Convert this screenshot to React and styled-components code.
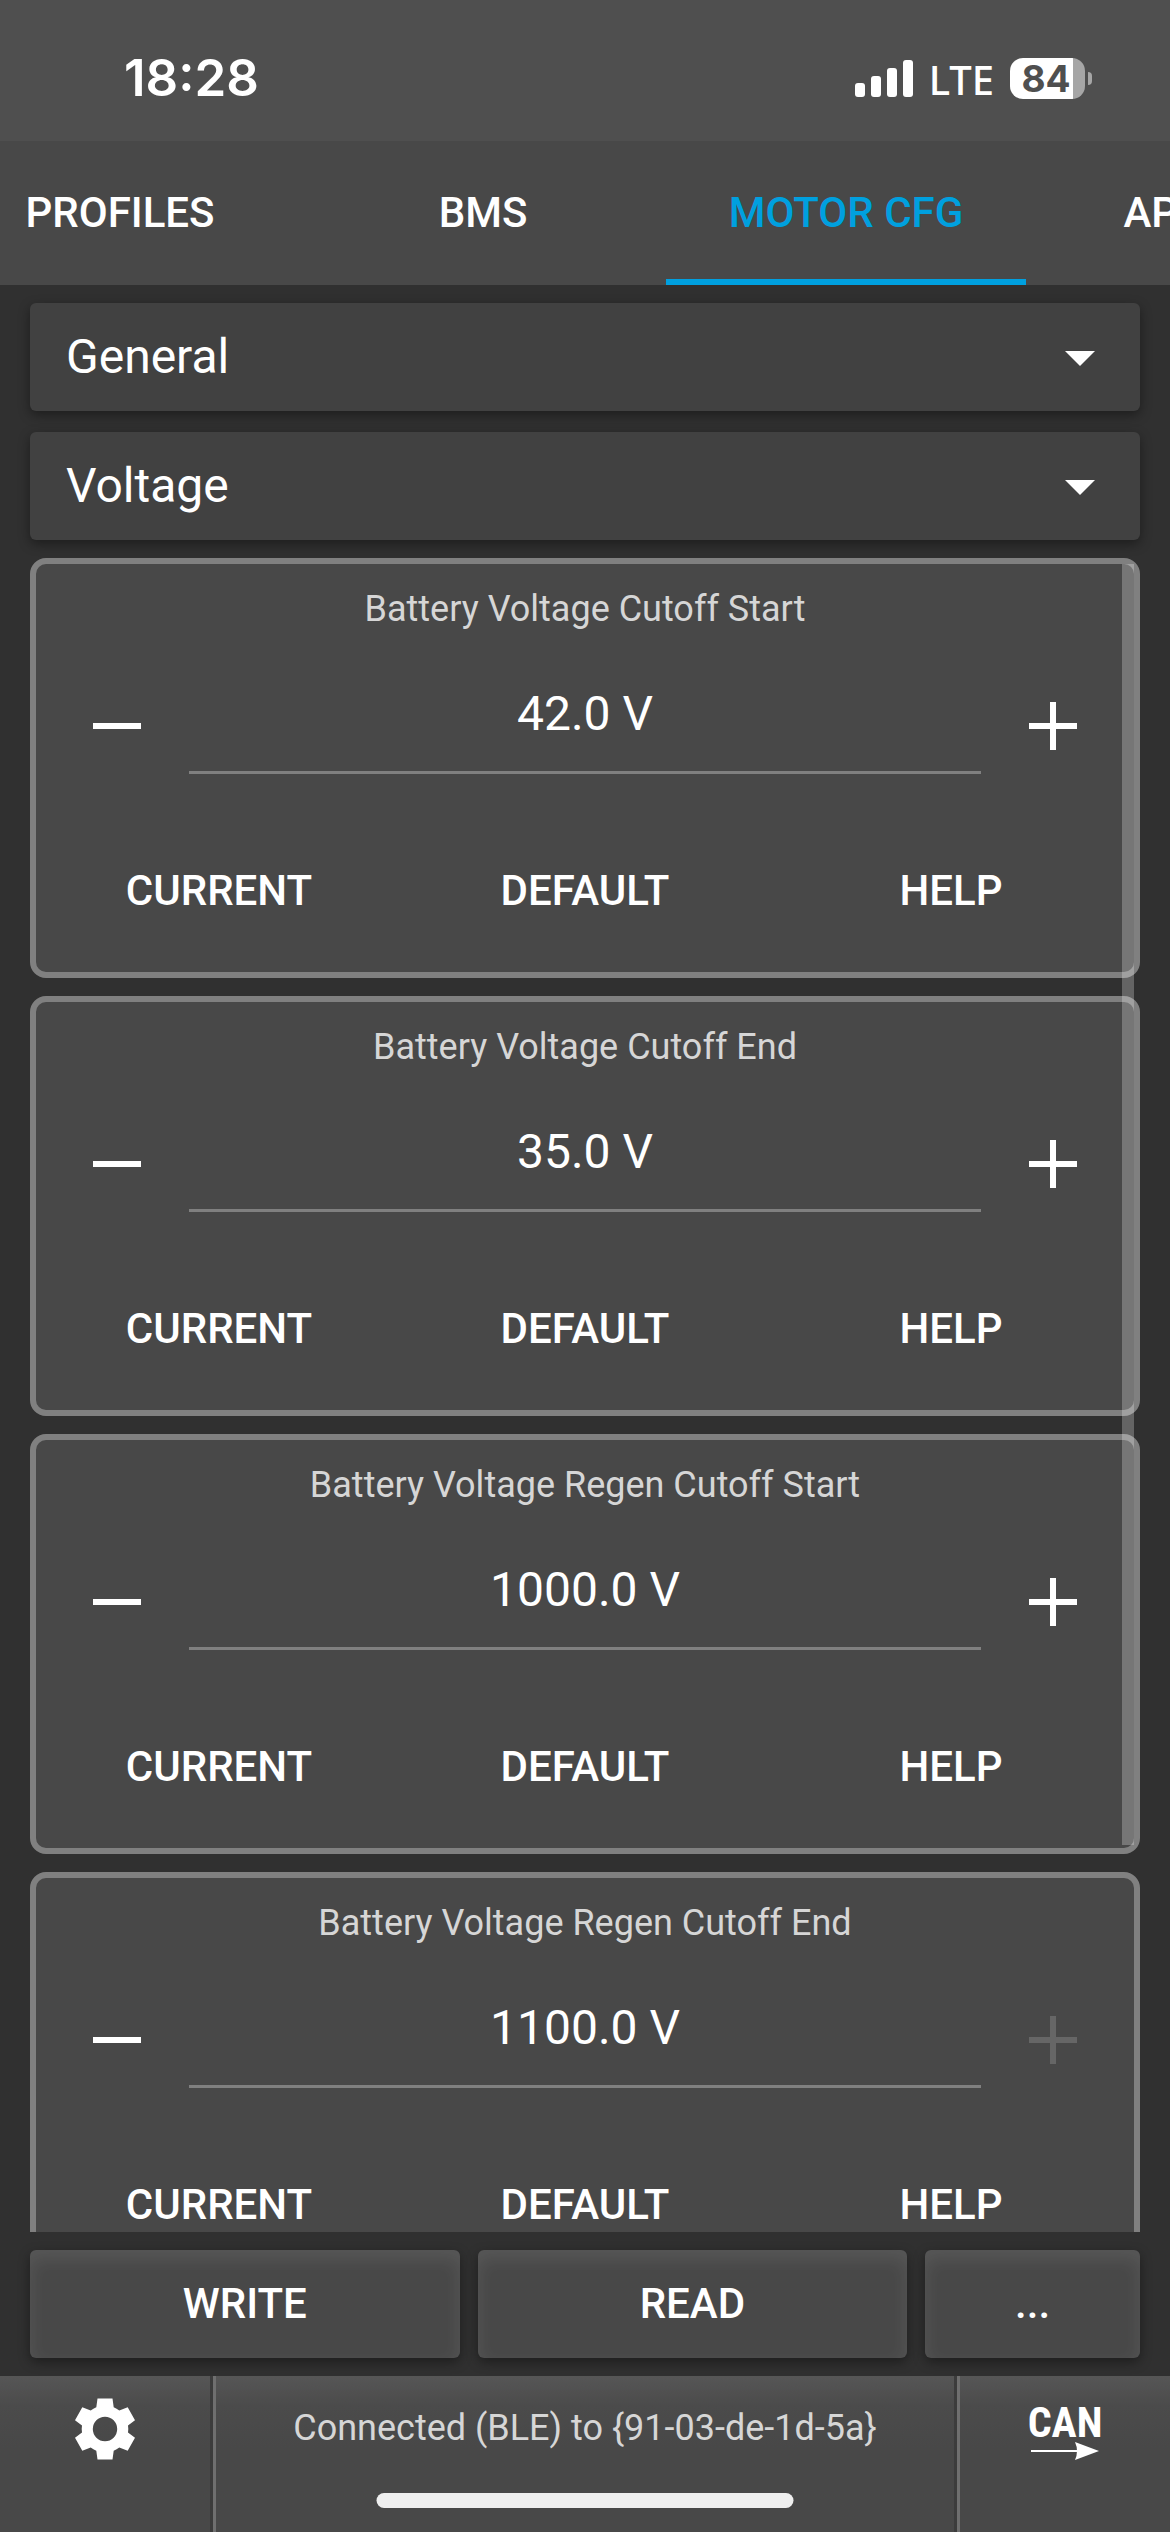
import { useState } from 'react';
import styled, { createGlobalStyle } from 'styled-components';

const GlobalStyle = createGlobalStyle`
    * {
        box-sizing: border-box;
    }
    body {
        margin: 0;
        background: #303030;
        color: #fff;
        font-family: Roboto, "Liberation Sans", sans-serif;
    }
    button, input, select {
        margin: 0;
        padding: 0;
        border: 0;
        border-radius: 0;
        background: none;
        color: inherit;
        font-family: inherit;
        outline: none;
    }
`;

const Screen = styled.div`
    display: flex;
    flex-direction: column;
    height: 100vh;
    overflow: hidden;
`;

const StatusBar = styled.header`
    flex: none;
    display: flex;
    align-items: center;
    justify-content: space-between;
    height: 141px;
    padding: 15px 78px 0 124px;
    background: #4f4f4f;
    font-family: Inter, "Liberation Sans", sans-serif;
`;
const Clock = styled.span`
    font-size: 51px;
    font-weight: 600;
    line-height: 60px;
`;
const StatusIcons = styled.div`
    display: flex;
    align-items: center;
    gap: 16px;
`;
const Network = styled.span`
    padding-top: 3px;
    font-family: "Noto Sans", sans-serif;
    font-size: 40px;
    font-weight: 500;
    line-height: 48px;
`;
const Battery = styled.div`
    display: flex;
    align-items: center;
    gap: 3px;
`;
const BatteryBody = styled.span`
    width: 75px;
    padding-right: 3px;
    border-radius: 13px;
    background: linear-gradient(to right, #fff 84%, #a6a6a6 84%);
    color: #4f4f4f;
    font-size: 37px;
    font-weight: 700;
    line-height: 41px;
    text-align: center;
`;
const BatteryTip = styled.span`
    width: 4px;
    height: 13px;
    border-radius: 0 4px 4px 0;
    background: #a6a6a6;
`;

const TabBar = styled.nav`
    flex: none;
    height: 144px;
    background: #484848;
    overflow: hidden;
`;
const TabStrip = styled.div`
    display: flex;
    gap: 3px;
    height: 100%;
    margin-left: -60px;
`;
const Tab = styled.button`
    flex: none;
    width: 360px;
    border-top: 4px solid transparent;
    border-bottom: 6px solid ${({ $active }) => ($active ? '#00a0df' : 'transparent')};
    color: ${({ $active }) => ($active ? '#00a0df' : '#fff')};
    font-size: 42px;
    font-weight: 500;
`;

const Content = styled.main`
    flex: 1;
    min-height: 0;
    display: flex;
    flex-direction: column;
    gap: 18px;
    padding: 18px 30px;
`;
const Selectors = styled.div`
    flex: none;
    display: flex;
    flex-direction: column;
    gap: 21px;
`;
const SelectBox = styled.div`
    position: relative;
    height: 108px;
    border-radius: 6px;
    background: #414141;
    box-shadow: 0 4px 12px rgba(0, 0, 0, 0.4);
`;
const Select = styled.select`
    appearance: none;
    width: 100%;
    height: 100%;
    padding: 0 100px 2px 36px;
    font-size: 48px;
`;
const Arrow = styled.svg`
    position: absolute;
    top: 48px;
    right: 45px;
    width: 30px;
    height: 15px;
    pointer-events: none;
`;

const ListArea = styled.div`
    position: relative;
    flex: 1;
    min-height: 0;
    overflow: hidden;
`;
const List = styled.div`
    display: flex;
    flex-direction: column;
    gap: 18px;
`;
const ScrollBar = styled.div`
    position: absolute;
    top: 6px;
    right: 6px;
    width: 12px;
    height: 1281px;
    background: rgba(255, 255, 255, 0.25);
`;

const Card = styled.section`
    flex: none;
    padding: 9px;
    border: 6px solid #808080;
    border-radius: 16px;
    background: #484848;
`;
const CardTitle = styled.label`
    display: block;
    margin-bottom: 9px;
    color: #d6d6d6;
    font-size: 36px;
    line-height: 72px;
    text-align: center;
`;
const Stepper = styled.div`
    display: flex;
    margin-bottom: 21px;
`;
const StepButton = styled.button`
    flex: none;
    display: flex;
    align-items: center;
    justify-content: center;
    width: 144px;
    height: 144px;
    &:disabled {
        color: #666;
    }
`;
const ValueInput = styled.input`
    flex: 1;
    min-width: 0;
    height: 120px;
    padding-top: 2px;
    border-bottom: 3px solid #808080;
    font-size: 48px;
    text-align: center;
`;
const Actions = styled.div`
    display: grid;
    grid-template-columns: repeat(3, 1fr);
    gap: 18px;
`;
const FlatButton = styled.button`
    height: 144px;
    padding-bottom: 2px;
    font-size: 42px;
    font-weight: 500;
`;

const Toolbar = styled.div`
    flex: none;
    display: flex;
    gap: 18px;
`;
const RaisedButton = styled.button`
    flex: ${({ $grow }) => $grow} 1 0;
    height: 108px;
    padding-bottom: 2px;
    border-radius: 6px;
    background: #484848;
    box-shadow: 0 4px 12px rgba(0, 0, 0, 0.4), inset 0 8px 18px rgba(255, 255, 255, 0.09);
    font-size: 42px;
    font-weight: 500;
`;

const Footer = styled.footer`
    position: relative;
    flex: none;
    display: flex;
    height: 156px;
    background: linear-gradient(#565656, #4b4b4b 30px, #484848 72px);
`;
const FooterButton = styled.button`
    flex: none;
    display: flex;
    align-items: center;
    justify-content: center;
    width: 210px;
    height: 105px;
`;
const Divider = styled.div`
    flex: none;
    width: 6px;
    border-left: 3px solid #3c3c3c;
    background: #6f6f6f;
`;
const Connection = styled.div`
    flex: 1;
    color: #d6d6d6;
    font-size: 36px;
    line-height: 105px;
    text-align: center;
`;
const HomeIndicator = styled.div`
    position: absolute;
    bottom: 24px;
    left: 50%;
    width: 417px;
    height: 15px;
    border-radius: 8px;
    background: #efefef;
    transform: translateX(-50%);
`;

const tabs = ['PROFILES', 'BMS', 'MOTOR CFG', 'APP CFG'];

const params = [
    { id: 'cutoff-start', name: 'Battery Voltage Cutoff Start', value: 42 },
    { id: 'cutoff-end', name: 'Battery Voltage Cutoff End', value: 35 },
    { id: 'regen-start', name: 'Battery Voltage Regen Cutoff Start', value: 1000 },
    { id: 'regen-end', name: 'Battery Voltage Regen Cutoff End', value: 1100 },
];

const MAX_VOLTAGE = 1100;

function SignalIcon() {
    return (
        <svg width="58" height="37" viewBox="0 0 58 37" fill="#fff">
            <rect x="0" y="23" width="10" height="14" rx="3" />
            <rect x="16" y="16" width="10" height="21" rx="3" />
            <rect x="32" y="8" width="10" height="29" rx="3" />
            <rect x="48" y="0" width="10" height="37" rx="3" />
        </svg>
    );
}

function MinusIcon() {
    return (
        <svg width="48" height="48" viewBox="0 0 48 48" fill="currentColor">
            <rect y="21" width="48" height="6" />
        </svg>
    );
}

function PlusIcon() {
    return (
        <svg width="48" height="48" viewBox="0 0 48 48" fill="currentColor">
            <path d="M21 0h6v21h21v6H27v21h-6V27H0v-6h21z" />
        </svg>
    );
}

function GearIcon() {
    return (
        <svg width="60" height="62" viewBox="0 0 60 62" fill="#fff" fillRule="evenodd">
            <path d="M22.5 0.5h15l1.2 8.8q3 1.2 5.6 3.2l8.4-3.2L60 22.3l-7 5.2q0.6 3.5 0 7l7 5.2L52.7 52.7l-8.4-3.2q-2.6 2-5.6 3.2l-1.2 8.8h-15l-1.2-8.8q-3-1.2-5.6-3.2l-8.4 3.2L0 39.7l7-5.2q-0.6-3.5 0-7L0 22.3 7.300 9.300l8.400 3.200q2.600-2 5.600-3.200zM30 18.800a12.200 12.200 0 1 0 0 24.400a12.200 12.200 0 1 0 0-24.400z" />
        </svg>
    );
}

function CanIcon() {
    return (
        <svg width="88" height="64" viewBox="-8 0 88 64" fill="#fff">
            <text
                x="36"
                y="40"
                textAnchor="middle"
                fontFamily='"Liberation Sans Narrow", "Roboto Condensed", "DejaVu Sans Condensed", sans-serif'
                fontSize="42"
                fontWeight="700"
            >
                CAN
            </text>
            <rect x="2" y="53" width="50" height="2" />
            <path d="M46 45l24 9-24 9q4-9 0-18z" />
        </svg>
    );
}

function Dropdown({ label, options }) {
    return (
        <SelectBox>
            <Select aria-label={label}>
                {options.map((option) => (
                    <option key={option}>{option}</option>
                ))}
            </Select>
            <Arrow viewBox="0 0 30 15" fill="#fff">
                <path d="M0 0h30L15 15z" />
            </Arrow>
        </SelectBox>
    );
}

function ParamCard({ id, name, initial }) {
    const [value, setValue] = useState(initial);

    return (
        <Card>
            <CardTitle htmlFor={id}>{name}</CardTitle>
            <Stepper>
                <StepButton aria-label="Decrease" onClick={() => setValue(value - 1)}>
                    <MinusIcon />
                </StepButton>
                <ValueInput id={id} value={value.toFixed(1) + ' V'} readOnly />
                <StepButton
                    aria-label="Increase"
                    disabled={value >= MAX_VOLTAGE}
                    onClick={() => setValue(value + 1)}
                >
                    <PlusIcon />
                </StepButton>
            </Stepper>
            <Actions>
                <FlatButton>CURRENT</FlatButton>
                <FlatButton onClick={() => setValue(initial)}>DEFAULT</FlatButton>
                <FlatButton>HELP</FlatButton>
            </Actions>
        </Card>
    );
}

export default function App() {
    const [activeTab, setActiveTab] = useState('MOTOR CFG');

    return (
        <Screen>
            <GlobalStyle />
            <StatusBar>
                <Clock>18:28</Clock>
                <StatusIcons>
                    <SignalIcon />
                    <Network>LTE</Network>
                    <Battery>
                        <BatteryBody>84</BatteryBody>
                        <BatteryTip />
                    </Battery>
                </StatusIcons>
            </StatusBar>
            <TabBar>
                <TabStrip>
                    {tabs.map((tab) => (
                        <Tab key={tab} $active={tab === activeTab} onClick={() => setActiveTab(tab)}>
                            {tab}
                        </Tab>
                    ))}
                </TabStrip>
            </TabBar>
            <Content>
                <Selectors>
                    <Dropdown label="Group" options={['General']} />
                    <Dropdown label="Subgroup" options={['Voltage']} />
                </Selectors>
                <ListArea>
                    <List>
                        {params.map(({ id, name, value }) => (
                            <ParamCard key={id} id={id} name={name} initial={value} />
                        ))}
                    </List>
                    <ScrollBar />
                </ListArea>
                <Toolbar>
                    <RaisedButton $grow={2}>WRITE</RaisedButton>
                    <RaisedButton $grow={2}>READ</RaisedButton>
                    <RaisedButton $grow={1}>...</RaisedButton>
                </Toolbar>
            </Content>
            <Footer>
                <FooterButton aria-label="Settings">
                    <GearIcon />
                </FooterButton>
                <Divider />
                <Connection>Connected (BLE) to {'{91-03-de-1d-5a}'}</Connection>
                <Divider />
                <FooterButton aria-label="CAN forwarding">
                    <CanIcon />
                </FooterButton>
                <HomeIndicator />
            </Footer>
        </Screen>
    );
}
